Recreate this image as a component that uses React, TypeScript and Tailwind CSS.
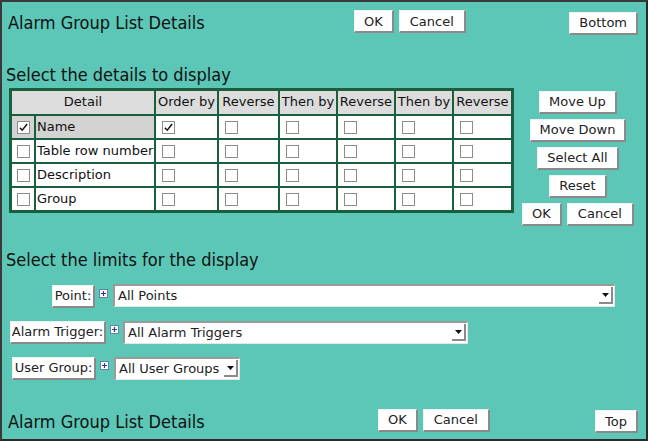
import React from "react"

const Btn = ({ children, className = "px-[9px]" }: { children: React.ReactNode; className?: string }) => (
  <button
    className={`h-[23px] shrink-0 bg-white text-[13px] leading-none whitespace-nowrap text-[#222] border border-t-[#f0f0f0] border-l-[#f0f0f0] border-r-2 border-b-2 border-r-[#8a8a8a] border-b-[#8a8a8a] ${className}`}
  >
    {children}
  </button>
)

const Box = ({ checked = false }: { checked?: boolean }) => (
  <span className="inline-flex h-[13px] w-[13px] items-center justify-center border border-[#8c8c8c] bg-white align-middle">
    {checked && (
      <svg viewBox="0 0 12 12" className="h-[11px] w-[11px]">
        <path d="M2 6.2 L4.6 9 L10 2.2" fill="none" stroke="#111" strokeWidth="1.6" />
      </svg>
    )}
  </span>
)

const Plus = () => (
  <span className="flex h-[9px] w-[9px] shrink-0 items-center justify-center border border-[#6a7fb8] bg-white">
    <svg viewBox="0 0 7 7" className="h-[7px] w-[7px]">
      <path d="M3.5 1 V6 M1 3.5 H6" stroke="#2a3f88" strokeWidth="1.2" />
    </svg>
  </span>
)

const Select = ({ label, className = "" }: { label: string; className?: string }) => (
  <div
    className={`flex h-[23px] shrink-0 items-center bg-white border-t-2 border-l-2 border-t-[#9a9a9a] border-l-[#9a9a9a] border-b border-r border-b-[#e6e6e6] border-r-[#e6e6e6] ${className}`}
  >
    <span className="flex-1 pl-[3px] text-[13px] whitespace-nowrap text-[#222]">{label}</span>
    <span className="mr-[1px] flex h-[17px] w-[14px] items-center justify-center bg-white border-r-2 border-b-2 border-r-[#8a8a8a] border-b-[#8a8a8a]">
      <svg viewBox="0 0 7 4" className="h-[4px] w-[7px]">
        <path d="M0 0 H7 L3.5 4 Z" fill="#111" />
      </svg>
    </span>
  </div>
)

const heads = ["Order by", "Reverse", "Then by", "Reverse", "Then by", "Reverse"]
const widths = ["w-[61px]", "w-[59px]", "w-[56px]", "w-[56px]", "w-[56px]", "w-[57px]"]
const rows = ["Name", "Table row number", "Description", "Group"]

const heading = { fontFamily: '"DejaVu Sans Condensed", "DejaVu Sans", sans-serif' }

export default function App() {
  return (
    <div
      className="h-[441px] w-[648px] overflow-hidden bg-[#5cc7b7] border-2 border-t-[#3a3a3a] border-l-[#3a3a3a] border-r-[#2a2a2a] border-b-[#2a2a2a] text-[#111]"
      style={{ fontFamily: '"DejaVu Sans", sans-serif' }}
    >
      {/* header */}
      <div className="flex items-start pt-[8px]">
        <h1 className="w-[352px] pl-[6px] pt-[2px] text-[18px] leading-[22px]" style={heading}>
          Alarm Group List Details
        </h1>
        <div className="flex gap-[5px]">
          <Btn>OK</Btn>
          <Btn className="px-[10px]">Cancel</Btn>
        </div>
        <div className="ml-auto mr-[8px]">
          <Btn>Bottom</Btn>
        </div>
      </div>

      <h2 className="mt-[30px] pl-[4px] text-[18px] leading-[20px]" style={heading}>
        Select the details to display
      </h2>

      <div className="mt-[3px] flex items-start">
        <table className="ml-[7px] border-separate border-spacing-[2px] border border-[#1b5e3e] bg-[#1b5e3e] text-[13px]">
          <thead>
            <tr className="h-[23px] bg-[#dcdcdc]">
              <th colSpan={2} className="font-normal">Detail</th>
              {heads.map((h, i) => (
                <th key={i} className={`font-normal whitespace-nowrap ${widths[i]}`}>
                  {h}
                </th>
              ))}
            </tr>
          </thead>
          <tbody>
            {rows.map((r, i) => (
              <tr key={r} className="h-[22px]">
                <td className={`w-[22px] text-center ${i === 0 ? "bg-[#d3d3d3]" : "bg-white"}`}>
                  <Box checked={i === 0} />
                </td>
                <td className={`w-[118px] pl-[1px] whitespace-nowrap ${i === 0 ? "bg-[#d3d3d3]" : "bg-white"}`}>{r}</td>
                {heads.map((_, j) => (
                  <td key={j} className="bg-white pl-[6px]">
                    <Box checked={i === 0 && j === 0} />
                  </td>
                ))}
              </tr>
            ))}
          </tbody>
        </table>

        <div className="ml-[6px] mt-[3px] flex w-[116px] flex-col items-center gap-[5px]">
          <Btn>Move Up</Btn>
          <Btn>Move Down</Btn>
          <Btn>Select All</Btn>
          <Btn>Reset</Btn>
          <div className="flex gap-[5px]">
            <Btn>OK</Btn>
            <Btn className="px-[10px]">Cancel</Btn>
          </div>
        </div>
      </div>

      <h2 className="mt-[24px] pl-[4px] text-[18px] leading-[20px]" style={heading}>
        Select the limits for the display
      </h2>

      <div className="mt-[15px] flex flex-col gap-[13px]">
        <div className="flex items-start">
          <Btn className="ml-[50px] w-[43px] px-0">Point:</Btn>
          <span className="ml-[4px] mt-[4px]"><Plus /></span>
          <Select label="All Points" className="ml-[5px] w-[502px] -mt-[1px]" />
        </div>
        <div className="flex items-start">
          <Btn className="ml-[8px] w-[96px] px-0">Alarm Trigger:</Btn>
          <span className="ml-[4px] mt-[4px]"><Plus /></span>
          <Select label="All Alarm Triggers" className="ml-[4px] w-[345px]" />
        </div>
        <div className="flex items-start">
          <Btn className="ml-[10px] w-[84px] px-0">User Group:</Btn>
          <span className="ml-[4px] mt-[4px]"><Plus /></span>
          <Select label="All User Groups" className="ml-[5px] w-[126px]" />
        </div>
      </div>

      <div className="mt-[29px] flex items-start">
        <h1 className="w-[376px] pl-[6px] pt-[2px] text-[18px] leading-[22px]" style={heading}>
          Alarm Group List Details
        </h1>
        <div className="flex gap-[5px]">
          <Btn>OK</Btn>
          <Btn className="px-[10px]">Cancel</Btn>
        </div>
        <div className="ml-auto mr-[8px]">
          <Btn>Top</Btn>
        </div>
      </div>
    </div>
  )
}
